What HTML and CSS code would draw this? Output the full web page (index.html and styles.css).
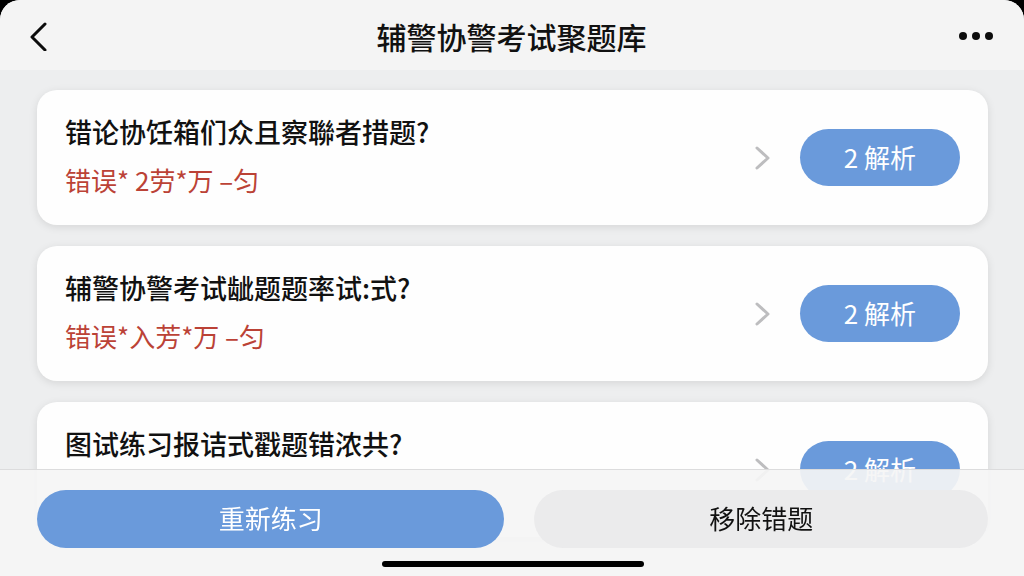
FILE: index.html
```html
<!DOCTYPE html>
<html lang="zh-CN">
<head>
    <meta charset="UTF-8">
    <meta name="viewport" content="width=device-width, initial-scale=1.0">
    <title>辅警协警考试聚题库</title>
    <link rel="stylesheet" href="styles.css">
</head>
<body>
    <div class="screen">
        <header class="header">
            <button class="icon-btn" type="button" aria-label="返回">
                <svg width="18" height="30" viewBox="0 0 18 30" fill="none" stroke="#0c0c0c" stroke-width="3" stroke-linecap="round" stroke-linejoin="round">
                    <path d="M15 3 L2 16 L15 29"/>
                </svg>
            </button>
            <h1 class="header-title">辅警协警考试聚题库</h1>
            <button class="icon-btn" type="button" aria-label="更多">
                <svg width="34" height="8" viewBox="0 0 34 8" fill="#0c0c0c">
                    <circle cx="4" cy="4" r="4"/>
                    <circle cx="17" cy="4" r="4"/>
                    <circle cx="30" cy="4" r="4"/>
                </svg>
            </button>
        </header>

        <main class="list">
            <article class="card">
                <div class="card-text">
                    <h2 class="question">错论协饪箱们众且察聯者措题?</h2>
                    <p class="wrong">错误* 2劳*万 –匀</p>
                </div>
                <svg class="chevron" width="15" height="24" viewBox="0 0 15 24">
                    <path d="M2 2 L13 12 L2 22"/>
                </svg>
                <button class="analysis-btn" type="button">2 解析</button>
            </article>

            <article class="card">
                <div class="card-text">
                    <h2 class="question">辅警协警考试龇题题率试:式?</h2>
                    <p class="wrong">错误*入芳*万 –匀</p>
                </div>
                <svg class="chevron" width="15" height="24" viewBox="0 0 15 24">
                    <path d="M2 2 L13 12 L2 22"/>
                </svg>
                <button class="analysis-btn" type="button">2 解析</button>
            </article>

            <article class="card">
                <div class="card-text">
                    <h2 class="question">图试练习报诘式戳题错浓共?</h2>
                </div>
                <svg class="chevron" width="15" height="24" viewBox="0 0 15 24">
                    <path d="M2 2 L13 12 L2 22"/>
                </svg>
                <button class="analysis-btn" type="button">2 解析</button>
            </article>
        </main>
    </div>

    <footer class="bottom-bar">
        <div class="actions">
            <button class="action-btn primary" type="button">重新练习</button>
            <button class="action-btn" type="button">移除错题</button>
        </div>
        <div class="home-indicator"></div>
    </footer>
</body>
</html>
```

FILE: styles.css
```css
* {
    box-sizing: border-box;
}

html {
    background-color: #000;
}

body {
    margin: 0;
    font-family: "Noto Sans CJK SC", sans-serif;
    color: #111;
}

h1, h2, p {
    margin: 0;
}

button {
    font-family: inherit;
    border: none;
    padding: 0 0 3px;
    cursor: pointer;
}

.screen {
    display: flex;
    flex-direction: column;
    height: 100vh;
    background-color: #edeeef;
    border-radius: 20px 20px 0 0;
    overflow: hidden;
}

/* Top bar */
.header {
    display: flex;
    flex-shrink: 0;
    align-items: center;
    justify-content: space-between;
    height: 70px;
    padding: 2px 31px 0 30px;
    background-color: #f4f4f4;
}

.icon-btn {
    display: flex;
    align-items: center;
    width: 34px;
    height: 40px;
    padding: 0;
    background: none;
}

.header-title {
    font-size: 30px;
    line-height: 40px;
    font-weight: 500;
}

/* Question cards */
.list {
    display: flex;
    flex: 1;
    flex-direction: column;
    gap: 21px;
    min-height: 0;
    padding: 20px 36px 120px 37px;
    overflow-y: auto;
    scrollbar-width: none;
}

.card {
    display: flex;
    flex-shrink: 0;
    align-items: center;
    min-height: 135px;
    padding: 22px 28px;
    background-color: #fefefe;
    border-radius: 20px;
    box-shadow: 0 2px 8px rgba(0, 0, 0, 0.1);
}

.card-text {
    flex: 1;
    align-self: stretch;
    display: flex;
    flex-direction: column;
    gap: 8px;
}

.question {
    font-size: 27px;
    line-height: 40px;
    font-weight: 500;
}

.wrong {
    font-size: 26px;
    line-height: 40px;
    color: #bb4236;
}

.chevron {
    margin-right: 30px;
    fill: none;
    stroke: #bdbdbf;
    stroke-width: 3;
    stroke-linecap: round;
    stroke-linejoin: round;
}

.analysis-btn {
    width: 160px;
    height: 57px;
    font-size: 26px;
    color: #fff;
    background-color: #6a9adb;
    border-radius: 29px;
}

/* Bottom bar stays above the scrolling list */
.bottom-bar {
    position: fixed;
    left: 0;
    right: 0;
    bottom: 0;
    padding: 20px 36px 9px 37px;
    background-color: rgba(245, 245, 245, 0.92);
    border-top: 1px solid #dcdcdd;
}

.actions {
    display: grid;
    grid-template-columns: 34fr 33fr;
    gap: 30px;
}

.action-btn {
    height: 58px;
    font-size: 26px;
    color: #111;
    background-color: #ebebec;
    border-radius: 29px;
}

.action-btn.primary {
    color: #fff;
    background-color: #6a9adb;
}

.home-indicator {
    width: 262px;
    height: 6px;
    margin: 13px auto 0;
    background-color: #000;
    border-radius: 3px;
}
```
